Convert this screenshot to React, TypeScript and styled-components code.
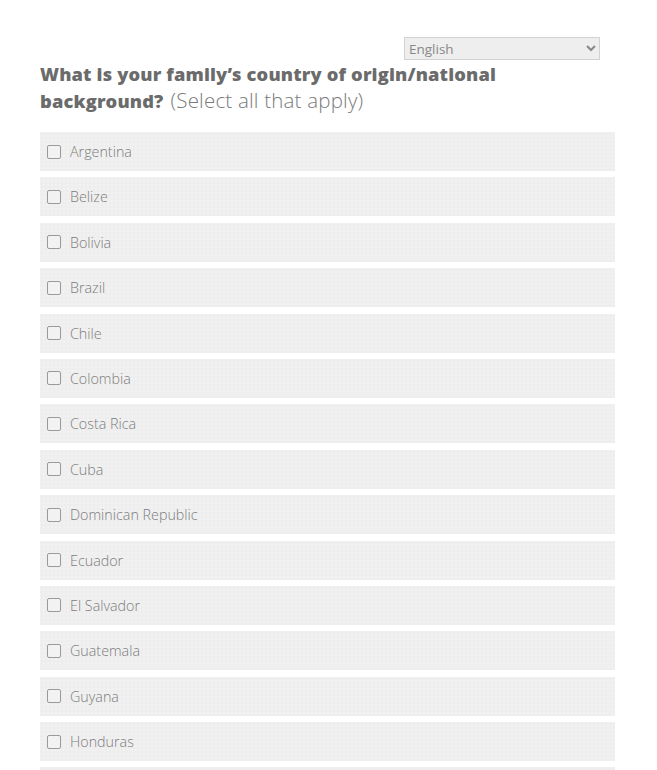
import React from 'react';
import styled, { createGlobalStyle } from 'styled-components';

const countries = [
  'Argentina',
  'Belize',
  'Bolivia',
  'Brazil',
  'Chile',
  'Colombia',
  'Costa Rica',
  'Cuba',
  'Dominican Republic',
  'Ecuador',
  'El Salvador',
  'Guatemala',
  'Guyana',
  'Honduras',
  'Mexico',
];

const GlobalStyle = createGlobalStyle`
  body {
    margin: 0;
    background: #fff;
    font-family: 'Open Sans', 'Noto Sans', sans-serif;
  }
`;

const App = () => {
  return (
    <>
      <GlobalStyle />
      <Page>
        <LangBar>
          <LangSelect defaultValue="en">
            <option value="en">English</option>
            <option value="es">Español</option>
          </LangSelect>
        </LangBar>
        <Question>
          What is your family’s country of origin/national background?
          <Hint>(Select all that apply)</Hint>
        </Question>
        <OptionList>
          {countries.map((name) => (
            <OptionRow key={name}>
              <Box type="checkbox" />
              <OptionLabel>{name}</OptionLabel>
            </OptionRow>
          ))}
        </OptionList>
      </Page>
    </>
  );
};

const Page = styled.div`
  width: 575px;
  padding: 37px 0 0 40px;
  height: 733px;
  overflow: hidden;
`;

const LangBar = styled.div`
  display: flex;
  justify-content: flex-end;
  padding-right: 15px;
`;

const LangSelect = styled.select`
  width: 196px;
  height: 23px;
  padding: 0 4px 0 0;
  border: 1px solid #d2d2d2;
  border-radius: 0;
  background: #eeeeee;
  color: #888;
  font-family: 'Open Sans', sans-serif;
  font-size: 13.5px;
`;

const Question = styled.h2`
  width: 480px;
  height: 52px;
  margin: 1px 0 0;
  font-size: 18.3px;
  line-height: 26px;
  font-weight: 800;
  color: #6b6b6b;
  letter-spacing: 0.15px;
`;

const Hint = styled.span`
  display: inline-block;
  margin-left: 7px;
  font-weight: 300;
  font-size: 20.5px;
  line-height: 26px;
  letter-spacing: 0.2px;
  color: #7a7a7a;
`;

const OptionList = styled.div`
  display: flex;
  flex-direction: column;
  gap: 6.4px;
  margin-top: 19px;
`;

const OptionRow = styled.label`
  display: flex;
  align-items: center;
  gap: 9px;
  height: 39px;
  flex-shrink: 0;
  padding-left: 7px;
  background-color: #eeeeee;
  background-image: radial-gradient(rgba(255, 255, 255, 0.55) 0.6px, transparent 0.8px);
  background-size: 4px 4px;
  background-position: 2px 10px;
`;

const Box = styled.input`
  appearance: none;
  width: 14px;
  height: 14px;
  margin: 0;
  border: 1px solid #9a9a9a;
  border-radius: 2px;
  background: #f2f2f2;
`;

const OptionLabel = styled.span`
  font-size: 14.3px;
  font-weight: 300;
  color: #7c7c7c;
`;

export default App;
